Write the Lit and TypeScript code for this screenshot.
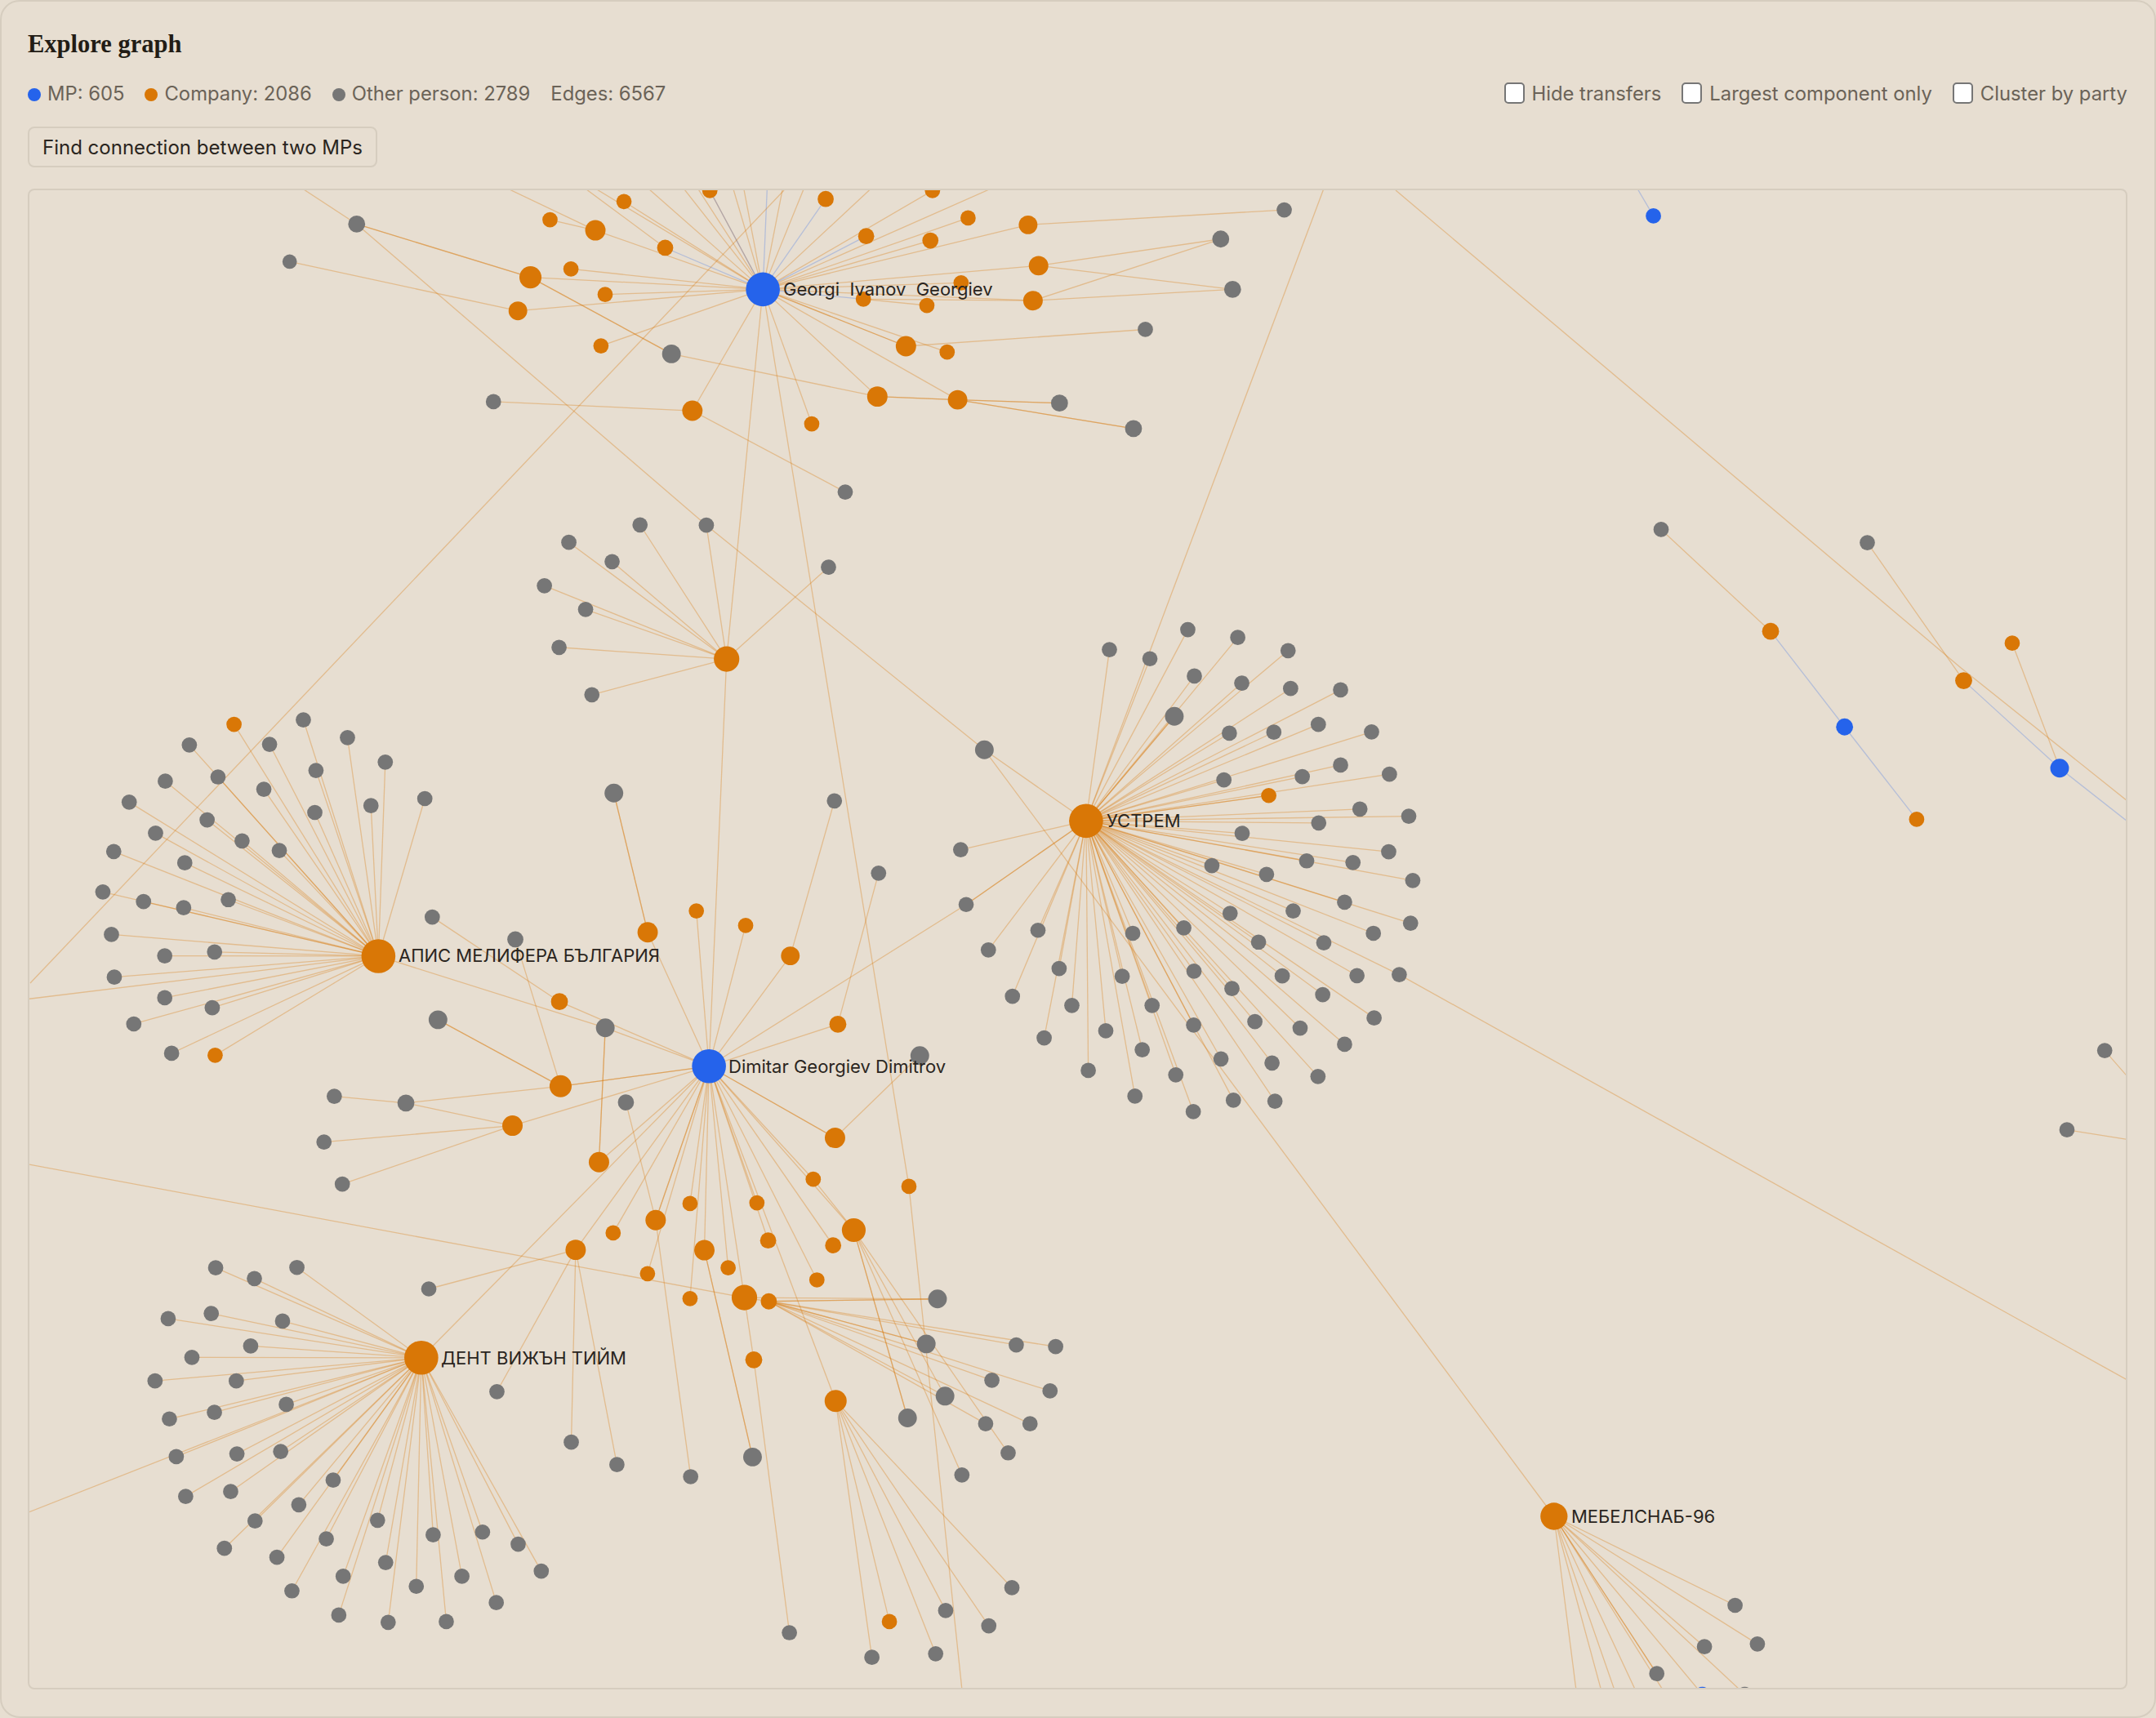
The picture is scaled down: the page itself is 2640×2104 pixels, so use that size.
import { LitElement, html, css, svg } from "lit";
import { customElement } from "lit/decorators.js";

type P = [number, number];
type T = "g" | "o" | "b";
const mk = (ox: number, oy: number, sx: number, sy: number) => (x: number, y: number): P => [ox + x / sx, oy + y / sy];
const z3 = mk(300, 220, 1.1701, 2.24);
const z4 = mk(60, 840, 1.4255, 2.529);
const z5 = mk(1100, 740, 2.24, 2.412);
const z6 = mk(160, 1440, 1.3067, 2.361);
const z7 = mk(1800, 1760, 1.867, 3);
const z8 = mk(1900, 220, 2.119, 1.307);
const z2 = (x: number, y: number): P => [x, y];

const nodes: { p: P; t: T; r: number }[] = [];
const edges: { a: P; b: P; blue: boolean }[] = [];
const n = (p: P, t: T = "g", r = 9): P => { nodes.push({ p, t, r }); return p; };
const e = (a: P, b: P, times = 1) => { for (let i = 0; i < times; i++) edges.push({ a, b, blue: false }); };
const eb = (a: P, b: P) => { edges.push({ a, b, blue: true }); };

// Hubs
const G = n(z3(742, 301), "b", 20);
const D = n(z4(1152, 1178), "b", 20);
const U = n(z5(515, 640), "o", 20);
const A = n(z4(575, 837), "o", 20);
const Tm = n(z6(465, 526), "o", 20);
const M = n(z7(192, 291), "o", 16);
const H = n(z3(690, 1315), "o", 15);

// Georgi cluster
const oS = (z: (x: number, y: number) => P, list: number[][], r = 9, t: T = "o") => list.map(([x, y, rr]) => n(z(x, y), t, rr ?? r));
const [g1, g2, g3, g4, g5, g6] = oS(z3, [[160, 122, 10], [64, 225, 8.5], [1489, 83], [1398, 163, 10], [1415, 301, 10], [1290, 411]], 9, "g");
const g7 = n(z3(611, 478), "g", 11);
const g8 = n(z3(356, 609));
const g9 = n(z3(1167, 613), "g", 10);
const g10 = n(z3(1273, 683), "g", 10);
const g11 = n(z3(860, 857));
const g716 = n(z5(236, 430), "g", 11);
const o = (x: number, y: number, r = 9) => n(z3(x, y), "o", r);
const a1 = o(543, 60), a2 = o(666, 30), a3 = o(832, 53, 9.5), a4 = o(985, 30), a5 = o(437, 110);
const a6 = o(502, 139, 12), a7 = o(602, 187, 9.5), a8 = o(890, 155, 9.5), a9 = o(982, 167, 9.5), a10 = o(1036, 105);
const a11 = o(1122, 124, 11), a12 = o(1137, 236, 11.5), a13 = o(1129, 332, 11.5), a14 = o(467, 245), a15 = o(409, 268, 13);
const a16 = o(516, 315), a17 = o(391, 360, 11), a18 = o(1026, 283), a19 = o(886, 328), a20 = o(977, 345);
const a21 = o(510, 456), a22 = o(947, 457, 12), a23 = o(1006, 473), a24 = o(906, 595, 12), a25 = o(1021, 604, 11.5);
const a26 = o(641, 634, 12), a27 = o(812, 670);

[a1, a2, a4, a6, a9, a10, a11, a12, a13, a14, a15, a16, a17, a18, a21, a22, a23, a24, a25, a26, a27].forEach((x) => e(G, x));
e(G, a22);
[a7, a8, a3, a19].forEach((x) => eb(G, x));
eb(G, z3(748, 28));
eb(G, a2);
e(a5, a6);
e(z3(380, 28), a6);
e(z3(490, 28), a7);
[505, 580, 630, 650, 700, 715, 770, 800, 895, 1065].forEach((x) => e(G, z3(x, 28)));
e(g1, a15, 2);
e(g2, a17);
e(a15, g7, 2);
e(g7, a24);
e(a24, a25, 2);
e(a25, g9, 2);
e(a25, g10, 2);
e(a22, g6);
e(a11, g3);
e(a12, g4);
e(a12, g5);
e(a13, g4);
e(a13, g5);
e(a19, a20);
e(a19, a13);
e(a26, g8);
e(a26, g11);
const hh = oS(z3, [[566, 947], [661, 948], [464, 995], [526, 1048], [429, 1114], [488, 1179], [450, 1283], [497, 1413], [836, 1063]], 9, "g");
hh.forEach((x) => e(H, x));
e(z3(85, 28), g1);
e(g1, hh[1]);
e(hh[1], g716);
e(G, H);
e(H, D);
e(z2(960, 233), z2(37, 1204));

// Long connectors
e(g716, U);
e(g716, M);
e(z3(1545, 28), U);
e(z2(1709, 233), z2(2400, 817));
e(z2(2400, 817), z2(2610, 985));

// Apis cluster
oS(z4, [[444, 105], [521, 160], [245, 183], [385, 181], [587, 236], [203, 295], [295, 282], [466, 262], [375, 320], [656, 349], [562, 371], [140, 360], [464, 392], [276, 415], [186, 456], [337, 480], [402, 510], [113, 513], [237, 548], [94, 638], [165, 668], [235, 687], [313, 662], [109, 770], [289, 824], [202, 836], [114, 902], [202, 966], [285, 997], [148, 1047], [214, 1138]], 9, "g").forEach((x) => e(A, x));
oS(z4, [[323, 119], [290, 1144]]).forEach((x) => e(A, x));
e(A, z2(30, 1224));

// Dimitar cluster
const d = (x: number, y: number, r = 9, t: T = "o") => n(z4(x, y), t, r);
const d1 = d(1130, 697), d2 = d(1216, 742), d3 = d(1045, 763, 12), d4 = d(1294, 836, 11), d5 = d(891, 978, 10);
const d6 = d(1377, 1048, 10), d7 = d(893, 1240, 13), d8 = d(809, 1362, 12), d9 = d(960, 1475, 12), d10 = d(1372, 1400, 12);
const d11 = d(1334, 1528), d12 = d(1501, 1550);
const dg1 = d(669, 716, 9, "g"), dg2 = d(814, 785, 9.5, "g"), dg3 = d(986, 332, 11, "g"), dg4 = d(1371, 356, 9, "g"), dg5 = d(1448, 580, 9, "g");
const dg6 = d(679, 1034, 11, "g"), dg7 = d(971, 1059, 11, "g"), dg8 = d(498, 1271, 9, "g"), dg9 = d(623, 1292, 10, "g"), dg10 = d(480, 1413, 9, "g");
const dg11 = d(512, 1543, 9, "g"), dg12 = d(1007, 1290, 9.5, "g"), dg13 = d(1520, 1145, 11, "g");
[d1, d2, d3, d4, d5, d6, d8, d9, d10, d11].forEach((x) => e(D, x));
e(D, d7, 2);
e(D, d10);
e(dg1, d5);
e(dg2, d7);
e(dg3, d3, 2);
e(dg4, d4);
e(dg5, d6);
e(dg6, d7, 2);
e(A, dg7);
e(dg7, D);
e(dg7, d9, 2);
e(dg8, dg9);
e(dg9, d8);
e(dg9, d7);
e(dg10, d8);
e(dg11, d8);
e(dg13, d10);
e(G, d12);
e(d12, z2(1178, 2070));

// Ustrem cluster
oS(z5, [[794, 75], [931, 98], [1069, 137], [579, 134], [690, 161], [812, 212], [942, 233], [1076, 249], [1213, 253], [908, 381], [1030, 378], [1152, 355], [1298, 377], [893, 519], [1108, 509], [1213, 475], [1347, 502], [1266, 605], [1400, 626], [1153, 646], [943, 677], [1345, 731], [1120, 758], [1247, 763], [860, 772], [1010, 798], [1411, 816], [1224, 880], [910, 913], [1083, 906], [1405, 942], [1303, 972], [783, 956], [988, 998], [1167, 1000], [643, 972], [811, 1084], [1053, 1098], [1258, 1097], [915, 1135], [1164, 1153], [1305, 1222], [614, 1099], [441, 1076], [383, 963], [247, 1021], [171, 725], [313, 1158], [476, 1185], [696, 1185], [810, 1243], [978, 1233], [1102, 1252], [1224, 1300], [400, 1281], [569, 1260], [669, 1316], [885, 1343], [1025, 1355], [1151, 1395], [521, 1377], [761, 1390], [649, 1453], [919, 1465], [1033, 1468], [809, 1499]], 9, "g").forEach((x) => e(U, x));
const u1 = n(z5(757, 331), "g", 11);
e(U, u1, 2);
const u2 = n(z5(1374, 1094));
e(U, u2);
e(u2, z2(2610, 1693));
const u3 = n(z5(186, 887));
e(U, u3, 2);
e(u3, D);
const u4 = n(z5(1016, 565), "o", 9);
e(U, u4, 2);

// Dent cluster
oS(z6, [[136, 266], [198, 297], [266, 265], [60, 413], [129, 398], [243, 420], [192, 492], [98, 525], [39, 593], [169, 593], [249, 661], [134, 684], [62, 703], [170, 804], [240, 797], [73, 812], [324, 880], [160, 913], [88, 927], [269, 951], [199, 998], [395, 996], [150, 1077], [313, 1050], [234, 1103], [484, 1038], [563, 1030], [620, 1065], [408, 1118], [657, 1143], [340, 1158], [530, 1158], [258, 1200], [457, 1187], [585, 1234], [333, 1270], [412, 1291], [505, 1289]], 9, "g").forEach((x) => e(Tm, x));
e(Tm, z2(30, 1854));
e(Tm, D);

const t = (x: number, y: number, r = 9, ty: T = "o") => n(z6(x, y), ty, r);
const b1 = t(895, 80), b2 = t(1002, 78), b3 = t(772, 165), b4 = t(840, 128, 12), b5 = t(1157, 157, 14), b6 = t(1020, 187, 9.5);
const b7 = t(1124, 201, 9.5), b8 = t(918, 215, 12), b9 = t(712, 214, 12), b10 = t(956, 266), b11 = t(827, 283), b12 = t(1098, 301);
const b13 = t(982, 352, 15), b14 = t(1021, 363, 9.5), b15 = t(895, 355), b16 = t(997, 532, 10), b17 = t(1128, 651, 13), b18 = t(1214, 1289);
[b1, b2, b3, b6, b7, b8, b9, b10, b11, b12, b13, b15, b17].forEach((x) => e(D, x));
e(D, b4, 2);
e(d11, b5);
e(D, b5);
const tg = (x: number, y: number, r = 9) => t(x, y, r, "g");
const c1 = tg(1291, 356, 11), c2 = tg(1273, 486, 11), c3 = tg(1417, 489), c4 = tg(1480, 494), c5 = tg(1378, 591), c6 = tg(1471, 622);
const c7 = tg(1303, 637, 11), c8 = tg(1243, 700, 11), c9 = tg(1368, 717), c10 = tg(1439, 717), c11 = tg(1404, 801), c12 = tg(1330, 865);
const c13 = tg(705, 770), c14 = tg(778, 835), c15 = tg(896, 870), c16 = tg(995, 813, 11), c17 = tg(1054, 1321), c18 = tg(1186, 1392);
const c19 = tg(1288, 1382), c20 = tg(1373, 1301), c21 = tg(1304, 1257), c22 = tg(1410, 1191), c23 = tg(477, 327), c24 = tg(586, 624);
e(b13, b14);
e(b13, b16);
e(b16, c17);
e(b14, c1, 2);
e(b13, c1);
[c3, c4, c5, c6, c7, c9, c10].forEach((x) => e(b14, x));
e(b14, c2, 2);
[c7, c11, c12].forEach((x) => e(b5, x));
e(b5, c8, 2);
[c18, c19, b18, c21, c20, c22].forEach((x) => e(b17, x));
e(b8, c16, 2);
e(b4, c15);
e(dg12, b4);
e(b9, c13);
e(b9, c14);
e(b9, c23);
e(b9, c24);
e(z2(30, 1425), b13);

// Mebel cluster
const mm = oS(z7, [[606, 618], [657, 760], [536, 770], [427, 869]], 9, "g");
mm.forEach((x) => e(M, x));
e(M, mm[3]);
n(z7(531, 945), "b", 9);
n(z7(628, 945), "g", 9);
e(M, z7(531, 945));
e(M, z7(628, 945));
[245, 305, 337, 387, 453].forEach((x) => e(M, z7(x, 960)));

// Right side scatter
const r1 = n(z8(264, 58), "b", 9);
eb(z8(180, -30), r1);
const r2 = n(z8(284, 560));
const r3 = n(z8(568, 723), "o", 10);
const r4 = n(z8(760, 876), "b", 10);
const r5 = n(z8(947, 1024), "o", 9);
const r6 = n(z8(819, 581));
const r7 = n(z8(1069, 802), "o", 10);
const r8 = n(z8(1195, 742), "o", 9);
const r9 = n(z8(1318, 942), "b", 11);
const r10 = n(z8(1435, 1394));
const r11 = n(z8(1337, 1521));
e(r2, r3);
eb(r3, r4);
eb(r4, r5);
e(r6, r7);
eb(r7, r9);
eb(r9, z8(1510, 1035));
e(r8, r9);
e(r10, z8(1510, 1447));
e(r11, z8(1510, 1538));

const labels: { p: P; s: string }[] = [
  { p: [959, 354], s: "Georgi  Ivanov  Georgiev" },
  { p: [488, 1170], s: "АПИС МЕЛИФЕРА БЪЛГАРИЯ" },
  { p: [892, 1306], s: "Dimitar Georgiev Dimitrov" },
  { p: [1355, 1005], s: "УСТРЕМ" },
  { p: [540, 1663], s: "ДЕНТ ВИЖЪН ТИЙМ" },
  { p: [1924, 1857], s: "МЕБЕЛСНАБ-96" },
];

@customElement("app-root")
export class AppRoot extends LitElement {
  static styles = css`
    :host {
      display: block;
      background: #e7ded1;
      font-family: Inter, "Liberation Sans", sans-serif;
    }
    .card {
      box-sizing: border-box;
      height: 2104px;
      border: 2px solid #d6cdbf;
      border-radius: 24px;
      padding: 32px 33px 33px 32px;
      display: flex;
      flex-direction: column;
      background: #e7ded1;
    }
    h1 {
      margin: 0;
      font-family: "Liberation Serif", serif;
      font-weight: 700;
      font-size: 30.5px;
      line-height: 40px;
      color: #221c15;
    }
    .toolbar {
      margin-top: 20px;
      height: 40px;
      display: flex;
      align-items: center;
      justify-content: space-between;
      color: #6b6358;
      font-size: 23.8px;
    }
    .legend, .checks { display: flex; align-items: center; gap: 25px; }
    .item { display: flex; align-items: center; gap: 8px; }
    .dot { width: 16px; height: 16px; border-radius: 50%; margin-top: 4px; }
    .dot.b { background: #2563eb; }
    .dot.o { background: #d97706; }
    .dot.g { background: #767676; }
    .checks label { display: flex; align-items: center; gap: 9px; }
    input {
      appearance: none;
      margin: 0;
      box-sizing: border-box;
      width: 25px;
      height: 26px;
      background: #fff;
      border: 2px solid #767676;
      border-radius: 5px;
    }
    button {
      align-self: flex-start;
      margin-top: 21px;
      box-sizing: border-box;
      height: 50px;
      padding: 0 16px;
      background: transparent;
      border: 2px solid #d6cdbf;
      border-radius: 8px;
      font: inherit;
      font-size: 24px;
      color: #2a2520;
    }
    .canvas {
      margin-top: 26px;
      box-sizing: border-box;
      height: 1838px;
      border: 2px solid #d6cdbf;
      border-radius: 8px;
      overflow: hidden;
    }
    svg { display: block; width: 100%; height: 100%; }
    .edge { stroke: rgba(217, 119, 6, 0.33); stroke-width: 1.3; fill: none; }
    .edge.blue { stroke: rgba(37, 99, 235, 0.26); }
    .n-b { fill: #2563eb; }
    .n-o { fill: #d97706; }
    .n-g { fill: #767676; }
    text {
      font-family: Inter, "Liberation Sans", sans-serif;
      font-size: 22px;
      fill: #2a2520;
      dominant-baseline: central;
      white-space: pre;
    }
  `;

  render() {
    return html`<div class="card">
      <h1>Explore graph</h1>
      <div class="toolbar">
        <div class="legend">
          <span class="item"><i class="dot b"></i>MP: 605</span>
          <span class="item"><i class="dot o"></i>Company: 2086</span>
          <span class="item"><i class="dot g"></i>Other person: 2789</span>
          <span class="item">Edges: 6567</span>
        </div>
        <div class="checks">
          <label><input type="checkbox" />Hide transfers</label>
          <label><input type="checkbox" />Largest component only</label>
          <label><input type="checkbox" />Cluster by party</label>
        </div>
      </div>
      <button>Find connection between two MPs</button>
      <div class="canvas" lang="bg">
        <svg viewBox="36 233 2567 1834" preserveAspectRatio="none">
          ${edges.map((l) => svg`<line class=${l.blue ? "edge blue" : "edge"} x1=${l.a[0]} y1=${l.a[1]} x2=${l.b[0]} y2=${l.b[1]}></line>`)}
          ${nodes.map((c) => svg`<circle class=${"n-" + c.t} cx=${c.p[0]} cy=${c.p[1]} r=${c.r * 1.04}></circle>`)}
          ${labels.map((l) => svg`<text x=${l.p[0]} y=${l.p[1]}>${l.s}</text>`)}
        </svg>
      </div>
    </div>`;
  }
}
